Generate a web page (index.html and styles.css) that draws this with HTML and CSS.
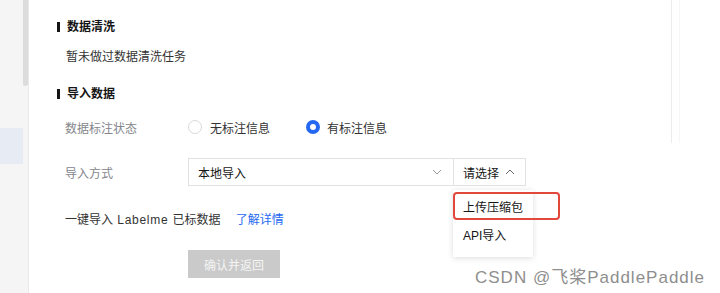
FILE: index.html
```html
<!DOCTYPE html>
<html lang="zh">
<head>
<meta charset="utf-8">
<link rel="stylesheet" href="styles.css">
</head>
<body>
<div class="page">
  <aside class="sidebar">
    <div class="scrollbar"></div>
    <div class="nav-active"></div>
  </aside>
  <main class="main">
    <section class="section">
      <h2 class="title">数据清洗</h2>
      <p class="empty">暂未做过数据清洗任务</p>
    </section>
    <section class="section section-import">
      <h2 class="title">导入数据</h2>
      <div class="row row-radio">
        <span class="label">数据标注状态</span>
        <label class="radio"><span class="dot"></span>无标注信息</label>
        <label class="radio checked"><span class="dot"></span>有标注信息</label>
      </div>
      <div class="row row-select">
        <span class="label">导入方式</span>
        <div class="select select-main">
          <span>本地导入</span>
          <svg class="chev" width="10" height="6" viewBox="0 0 10 6"><path d="M1 1 L5 5 L9 1" fill="none" stroke="#9a9a9a" stroke-width="1"/></svg>
        </div>
        <div class="select-wrap">
          <div class="select select-sub">
            <span>请选择</span>
            <svg class="chev" width="10" height="6" viewBox="0 0 10 6"><path d="M1 5 L5 1 L9 5" fill="none" stroke="#666" stroke-width="1"/></svg>
          </div>
          <ul class="dropdown">
            <li>上传压缩包</li>
            <li>API导入</li>
          </ul>
          <div class="highlight"></div>
        </div>
      </div>
      <div class="row row-link">
        <span class="link-text">一键导入 <span class="latin">Labelme</span> 已标数据</span>
        <a class="link">了解详情</a>
      </div>
      <div class="row row-btn">
        <button class="btn">确认并返回</button>
      </div>
    </section>
  </main>
  <div class="aside-right">
    <div class="rline"></div>
    <div class="rline faint"></div>
  </div>
</div>
<div class="watermark">CSDN @飞桨PaddlePaddle</div>
</body>
</html>
```

FILE: styles.css
```css
* { box-sizing: border-box; }
html, body { margin: 0; padding: 0; background: #fff; }
body {
  width: 720px;
  height: 293px;
  overflow: hidden;
  font-family: "Liberation Sans", "Noto Sans CJK SC", sans-serif;
  font-size: 12px;
  color: #333;
  position: relative;
}
.page { display: flex; height: 293px; }

.sidebar {
  width: 29px;
  flex: none;
  background: #f5f5f5;
  border-right: 1px solid #e9e9e9;
  position: relative;
}
.scrollbar {
  position: absolute;
  left: 23px;
  top: 0;
  width: 5px;
  height: 86px;
  background: #dcdcdc;
  border-radius: 0 0 3px 3px;
}
.nav-active {
  margin-top: 128px;
  width: 23px;
  height: 36px;
  background: #e7ebf3;
}

.main {
  flex: 1;
  padding-left: 28px;
  padding-top: 18px;
}
.section { margin: 0; }
.title {
  margin: 0;
  font-size: 12px;
  font-weight: bold;
  color: #151515;
  line-height: 18px;
  display: flex;
  align-items: center;
}
.title::before {
  content: "";
  width: 3px;
  height: 10px;
  background: #151515;
  margin-right: 7px;
}
.empty {
  margin: 12px 0 0 9px;
  line-height: 18px;
  color: #333;
}
.section-import { margin-top: 19px; }

.row {
  display: flex;
  align-items: center;
  padding-left: 8px;
}
.label {
  width: 123px;
  flex: none;
  color: #84868c;
}
.row-radio { margin-top: 14px; height: 20px; }
.radio {
  display: flex;
  align-items: center;
  color: #333;
  margin-right: 36px;
}
.dot {
  width: 14px;
  height: 14px;
  border-radius: 50%;
  border: 1px solid #d9d9d9;
  background: #fff;
  margin-right: 8px;
}
.radio.checked .dot {
  border: 4.5px solid #2468f2;
  margin-right: 7px;
}

.row-select { margin-top: 21px; height: 28px; }
.select {
  height: 28px;
  border: 1px solid #e2e2e2;
  display: flex;
  align-items: center;
  justify-content: space-between;
  color: #151515;
  background: #fff;
}
.select-main {
  width: 266px;
  padding: 0 11px 0 9px;
}
.select-sub {
  width: 72px;
  border-left: none;
  padding: 0 10px 0 9px;
}
.select-wrap { position: relative; }

.dropdown {
  position: absolute;
  left: -1px;
  top: 32px;
  width: 80px;
  margin: 0;
  padding: 4px 0 7px;
  list-style: none;
  background: #fff;
  box-shadow: 0 1px 6px rgba(0,0,0,0.14);
  z-index: 2;
}
.dropdown li {
  height: 28px;
  line-height: 28px;
  padding-left: 10px;
  color: #151515;
}
.highlight {
  position: absolute;
  left: -1px;
  top: 34px;
  width: 107px;
  height: 28px;
  border: 2px solid #e2473b;
  border-radius: 4px;
  z-index: 3;
}

.row-link { margin-top: 25px; line-height: 18px; color: #333; }
.link-text { word-spacing: 1px; }
.latin { letter-spacing: 0.7px; }
.link { color: #2468f2; margin-left: 15px; }

.row-btn { margin-top: 21px; padding-left: 131px; }
.btn {
  width: 92px;
  height: 28px;
  border: none;
  background: #cacaca;
  color: #f4f4f4;
  font-family: inherit;
  font-size: 12px;
  padding: 0;
}

.aside-right {
  width: 49px;
  flex: none;
  display: flex;
  gap: 7px;
}
.rline {
  width: 1px;
  height: 143px;
  background: #ececec;
}
.rline.faint { background: #f6f6f6; }

.watermark {
  position: absolute;
  left: 475px;
  top: 263px;
  font-size: 17px;
  letter-spacing: 1px;
  color: #8e8e8e;
  white-space: nowrap;
  z-index: 4;
}
```
